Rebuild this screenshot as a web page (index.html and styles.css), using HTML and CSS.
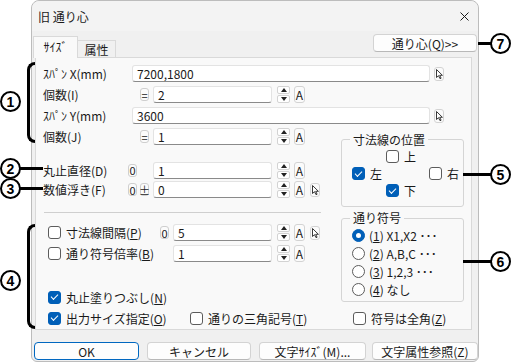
FILE: index.html
```html
<!DOCTYPE html>
<html lang="ja">
<head>
    <meta charset="UTF-8">
    <title>旧 通り心</title>
    <link rel="stylesheet" href="styles.css">
</head>
<body>
<div class="stage">

    <div class="dialog">
        <div class="titlebar">
            <span class="title">旧 通り心</span>
            <svg class="close" width="9" height="9" viewBox="0 0 9 9"><path d="M0.5 0.5L8.5 8.5M8.5 0.5L0.5 8.5" stroke="#1a1a1a" stroke-width="1"/></svg>
        </div>

        <div class="tabbar">
            <div class="tab active">ｻｲｽﾞ</div>
            <div class="tab">属性</div>
            <button class="btn btn-q">通り心(Q)&gt;&gt;</button>
        </div>

        <div class="page">
            <div class="row">
                <span class="label">ｽﾊﾟﾝ X(mm)</span>
                <span class="field wide">7200,1800</span>
                <span class="pick near"><svg width="8" height="12" viewBox="0 0 8 12"><path d="M1.5 1.5v8l2-1.8 1.5 3 1.1-.5-1.4-2.9h2.7z" fill="#fff" stroke="#222" stroke-width="0.9" stroke-linejoin="round"/></svg></span>
            </div>
            <div class="row">
                <span class="label">個数(I)</span>
                <span class="mini blank"></span>
                <span class="mini b">=</span>
                <span class="field">2</span>
                <span class="spin"><i class="up"></i><i class="down"></i></span>
                <span class="abtn">A</span>
            </div>
            <div class="row">
                <span class="label">ｽﾊﾟﾝ Y(mm)</span>
                <span class="field wide">3600</span>
                <span class="pick near"><svg width="8" height="12" viewBox="0 0 8 12"><path d="M1.5 1.5v8l2-1.8 1.5 3 1.1-.5-1.4-2.9h2.7z" fill="#fff" stroke="#222" stroke-width="0.9" stroke-linejoin="round"/></svg></span>
            </div>

            <div class="mid">
                <div class="left">
                    <div class="row">
                        <span class="label">個数(J)</span>
                        <span class="mini blank"></span>
                        <span class="mini b">=</span>
                        <span class="field">1</span>
                        <span class="spin"><i class="up"></i><i class="down"></i></span>
                        <span class="abtn">A</span>
                    </div>
                    <div class="row row-d">
                        <span class="label">丸止直径(D)</span>
                        <span class="mini">0</span>
                        <span class="mini b blank"></span>
                        <span class="field">1</span>
                        <span class="spin"><i class="up"></i><i class="down"></i></span>
                        <span class="abtn">A</span>
                    </div>
                    <div class="row row-f">
                        <span class="label">数値浮き(F)</span>
                        <span class="mini">0</span>
                        <span class="mini b">±</span>
                        <span class="field">0</span>
                        <span class="spin"><i class="up"></i><i class="down"></i></span>
                        <span class="abtn">A</span>
                        <span class="pick"><svg width="8" height="12" viewBox="0 0 8 12"><path d="M1.5 1.5v8l2-1.8 1.5 3 1.1-.5-1.4-2.9h2.7z" fill="#fff" stroke="#222" stroke-width="0.9" stroke-linejoin="round"/></svg></span>
                    </div>

                    <div class="sep"></div>

                    <div class="row row-p">
                        <span class="check-item cw"><span class="box"></span><span>寸法線間隔(<u>P</u>)</span></span>
                        <span class="mini">0</span>
                        <span class="field short">5</span>
                        <span class="spin"><i class="up"></i><i class="down"></i></span>
                        <span class="abtn">A</span>
                        <span class="pick"><svg width="8" height="12" viewBox="0 0 8 12"><path d="M1.5 1.5v8l2-1.8 1.5 3 1.1-.5-1.4-2.9h2.7z" fill="#fff" stroke="#222" stroke-width="0.9" stroke-linejoin="round"/></svg></span>
                    </div>
                    <div class="row">
                        <span class="check-item cw"><span class="box"></span><span>通り符号倍率(<u>B</u>)</span></span>
                        <span class="mini blank"></span>
                        <span class="field short">1</span>
                        <span class="spin"><i class="up"></i><i class="down"></i></span>
                        <span class="abtn">A</span>
                    </div>
                    <div class="row row-n">
                        <span class="check-item"><span class="box on"></span><span>丸止塗りつぶし(<u>N</u>)</span></span>
                    </div>
                </div>

                <div class="right">
                    <div class="group g1">
                        <div class="group-title">寸法線の位置</div>
                        <div class="g-row"><span class="check-item top"><span class="box"></span><span>上</span></span></div>
                        <div class="g-row">
                            <span class="check-item lr"><span class="box on"></span><span>左</span></span>
                            <span class="check-item"><span class="box"></span><span>右</span></span>
                        </div>
                        <div class="g-row"><span class="check-item top"><span class="box on"></span><span>下</span></span></div>
                    </div>

                    <div class="group g2">
                        <div class="group-title">通り符号</div>
                        <div class="r-row"><span class="radio on"></span><span>(<u>1</u>) X1,X2 ･･･</span></div>
                        <div class="r-row"><span class="radio"></span><span>(<u>2</u>) A,B,C ･･･</span></div>
                        <div class="r-row"><span class="radio"></span><span>(<u>3</u>) 1,2,3 ･･･</span></div>
                        <div class="r-row"><span class="radio"></span><span>(<u>4</u>) なし</span></div>
                    </div>
                </div>
            </div>

            <div class="row row-o">
                <span class="check-item o1"><span class="box on"></span><span>出力サイズ指定(<u>O</u>)</span></span>
                <span class="check-item o2"><span class="box"></span><span>通りの三角記号(<u>T</u>)</span></span>
                <span class="check-item"><span class="box"></span><span>符号は全角(<u>Z</u>)</span></span>
            </div>
        </div>

        <div class="buttons">
            <button class="btn btn-ok">OK</button>
            <button class="btn btn-cancel">キャンセル</button>
            <button class="btn btn-size">文字ｻｲｽﾞ(M)...</button>
            <button class="btn btn-attr">文字属性参照(Z)</button>
        </div>
    </div>

    <!-- 注釈 -->
    <div class="brace brace-1"></div>
    <div class="brace brace-4"></div>
    <div class="lead lead-2"></div>
    <div class="lead lead-3"></div>
    <div class="lead lead-5"></div>
    <div class="lead lead-6"></div>
    <div class="lead lead-7"></div>
    <span class="num n1">1</span>
    <span class="num n2">2</span>
    <span class="num n3">3</span>
    <span class="num n4">4</span>
    <span class="num n5">5</span>
    <span class="num n6">6</span>
    <span class="num n7">7</span>
</div>
</body>
</html>
```

FILE: styles.css
```css
* {
    box-sizing: border-box;
}

body {
    margin: 0;
    background: #ffffff;
    font-family: "Noto Sans CJK JP", sans-serif;
    font-size: 12px;
    color: #1a1a1a;
}

.stage {
    position: relative;
    width: 512px;
    height: 363px;
    overflow: hidden;
}

/* ダイアログ */
.dialog {
    margin-left: 31px;
    width: 448px;
    height: 362px;
    background: #f0f0f0;
    border: 1px solid #bcbcbc;
    border-radius: 8px 8px 6px 6px;
    display: flex;
    flex-direction: column;
}

.titlebar {
    height: 30px;
    display: flex;
    align-items: center;
    padding: 0 9px 0 6px;
    background: #f3f3f3;
    border-radius: 8px 8px 0 0;
}

.title {
    flex: 1;
}

.tabbar {
    height: 26px;
    display: flex;
    align-items: flex-end;
}

.tab {
    display: flex;
    align-items: center;
    justify-content: center;
    border: 1px solid #d9d9d9;
    border-bottom: none;
}

.tab.active {
    position: relative;
    z-index: 1;
    margin-left: 1px;
    margin-bottom: -1px;
    width: 45px;
    height: 22px;
    background: #f9f9f9;
    padding-bottom: 2px;
}

.tab:not(.active) {
    width: 38px;
    height: 17px;
    border-left: none;
}

.btn {
    font-family: inherit;
    font-size: 12px;
    color: #1a1a1a;
    height: 18px;
    padding: 0;
    background: #fdfdfd;
    border: 1px solid #d3d3d3;
    border-bottom-color: #b8b8b8;
    border-radius: 4px;
}

.btn-q {
    align-self: flex-start;
    margin: 3px 1px 0 auto;
    width: 104px;
}

/* タブページ */
.page {
    margin: 0 6px 0 3px;
    height: 273px;
    padding-top: 5px;
    background: #f9f9f9;
    border: 1px solid #d9d9d9;
}

.row {
    display: flex;
    align-items: center;
    height: 21px;
}

.label {
    flex: none;
    width: 92px;
    padding-left: 7px;
}

.mini {
    flex: none;
    width: 9px;
    height: 13px;
    display: flex;
    align-items: center;
    justify-content: center;
    font-size: 11px;
    background: #fbfbfb;
    border: 1px solid #cfcfcf;
    border-radius: 3px;
}

.mini.b {
    margin-left: 3px;
}

.mini.blank {
    visibility: hidden;
}

.field {
    flex: none;
    width: 119px;
    height: 17px;
    margin-left: 4px;
    padding-left: 4px;
    display: flex;
    align-items: center;
    background: #ffffff;
    border: 1px solid #e3e3e3;
    border-bottom-color: #8a8a8a;
    border-radius: 3px;
}

.field.wide {
    width: 298px;
}

.field.short {
    width: 99px;
}

.spin {
    flex: none;
    width: 13px;
    margin-left: 5px;
    display: flex;
    flex-direction: column;
    gap: 1px;
}

.spin i {
    height: 8px;
    display: flex;
    align-items: center;
    justify-content: center;
    background: #ffffff;
    border: 1px solid #d3d3d3;
    border-radius: 2px;
}

.spin .up::after {
    content: "";
    border-left: 3.5px solid transparent;
    border-right: 3.5px solid transparent;
    border-bottom: 4px solid #222;
}

.spin .down::after {
    content: "";
    border-left: 3.5px solid transparent;
    border-right: 3.5px solid transparent;
    border-top: 4px solid #222;
}

.abtn {
    flex: none;
    width: 11px;
    height: 17px;
    margin-left: 4px;
    display: flex;
    align-items: center;
    justify-content: center;
    background: #fbfbfb;
    border: 1px solid #d3d3d3;
    border-radius: 3px;
}

.pick {
    flex: none;
    width: 10px;
    height: 14px;
    margin-left: 5px;
    display: flex;
    align-items: center;
    justify-content: center;
    background: #fbfbfb;
    border: 1px solid #d3d3d3;
    border-radius: 3px;
}

.pick.near {
    margin-left: 4px;
}

/* 中段 */
.mid {
    display: flex;
}

.left {
    width: 305px;
}

.row-d {
    margin-top: 13px;
    height: 20px;
}

.row-f {
    height: 19px;
}

.sep {
    margin: 13px 0 0 8px;
    width: 277px;
    height: 1px;
    background: #cfcfcf;
}

.row-p {
    margin-top: 9px;
}

.row-n {
    margin-top: 23px;
    height: 20px;
}

.check-item {
    display: flex;
    align-items: center;
    gap: 5px;
    white-space: nowrap;
}

.row .check-item {
    margin-left: 12px;
}

.row .check-item.cw {
    width: 112px;
}

.box {
    flex: none;
    width: 13px;
    height: 13px;
    border: 1px solid #5c5c5c;
    border-radius: 3px;
    background: #ffffff;
    display: flex;
    align-items: center;
    justify-content: center;
}

.box.on {
    background: #005fb8;
    border-color: #005fb8;
}

.box.on::after {
    content: "";
    width: 6px;
    height: 3px;
    margin-top: -2px;
    border-left: 1px solid #fff;
    border-bottom: 1px solid #fff;
    transform: rotate(-45deg);
}

.right {
    width: 123px;
    padding-top: 13px;
}

.group {
    border: 1px solid #d5d5d5;
    border-radius: 3px;
}

.group-title {
    width: fit-content;
    height: 16px;
    line-height: 16px;
    margin: -9px 0 0 8px;
    padding: 0 3px;
    background: #f9f9f9;
}

.g1 {
    padding: 1px 0 7px;
}

.g-row {
    height: 17px;
    display: flex;
    align-items: center;
}

.g-row .check-item {
    margin-left: 10px;
}

.g-row .check-item.top {
    margin-left: 44px;
}

.g-row .check-item.lr {
    width: 67px;
}

.g2 {
    margin-top: 11px;
    padding-bottom: 3px;
}

.r-row {
    height: 18px;
    display: flex;
    align-items: center;
    gap: 4px;
    padding-left: 10px;
    white-space: nowrap;
}

.radio {
    flex: none;
    width: 13px;
    height: 13px;
    border: 1px solid #5c5c5c;
    border-radius: 50%;
    background: #ffffff;
    display: flex;
    align-items: center;
    justify-content: center;
}

.radio.on {
    background: #005fb8;
    border-color: #005fb8;
}

.radio.on::after {
    content: "";
    width: 5px;
    height: 5px;
    border-radius: 50%;
    background: #ffffff;
}

.row-o {
    height: 22px;
}

.row-o .check-item.o1 {
    width: 142px;
}

.row-o .check-item.o2 {
    width: 163px;
    margin-left: 0;
}

.row-o .check-item:last-child {
    margin-left: 0;
}

/* 下部ボタン */
.buttons {
    margin-top: 12px;
    padding-left: 2px;
    display: flex;
}

.btn-ok {
    width: 105px;
    border-color: #0067c0;
}

.btn-cancel {
    width: 104px;
    margin-left: 8px;
}

.btn-size {
    width: 107px;
    margin-left: 8px;
}

.btn-attr {
    width: 106px;
    margin-left: 6px;
}

/* 注釈 */
.num {
    position: absolute;
    width: 21px;
    height: 21px;
    border: 2px solid #000;
    border-radius: 50%;
    background: #fff;
    display: flex;
    align-items: center;
    justify-content: center;
    font-family: "Liberation Sans", sans-serif;
    font-weight: bold;
    font-size: 14px;
    color: #000;
}

.n1 { left: 0; top: 91px; }
.n2 { left: 0; top: 158px; }
.n3 { left: 0; top: 178px; }
.n4 { left: 0; top: 270px; }
.n5 { left: 490px; top: 164px; }
.n6 { left: 490px; top: 251px; }
.n7 { left: 490px; top: 33px; }

.lead {
    position: absolute;
    height: 3px;
    background: #000;
}

.lead-2 { left: 20px; top: 167px; width: 23px; }
.lead-3 { left: 20px; top: 187px; width: 23px; }
.lead-5 { left: 463px; top: 173px; width: 28px; }
.lead-6 { left: 463px; top: 260px; width: 28px; }
.lead-7 { left: 478px; top: 42px; width: 13px; }

.brace {
    position: absolute;
    left: 27px;
    width: 8px;
    border: 3px solid #000;
    border-right: none;
    border-radius: 8px 0 0 8px;
}

.brace-1 { top: 62px; height: 81px; }
.brace-4 { top: 224px; height: 105px; }
```
